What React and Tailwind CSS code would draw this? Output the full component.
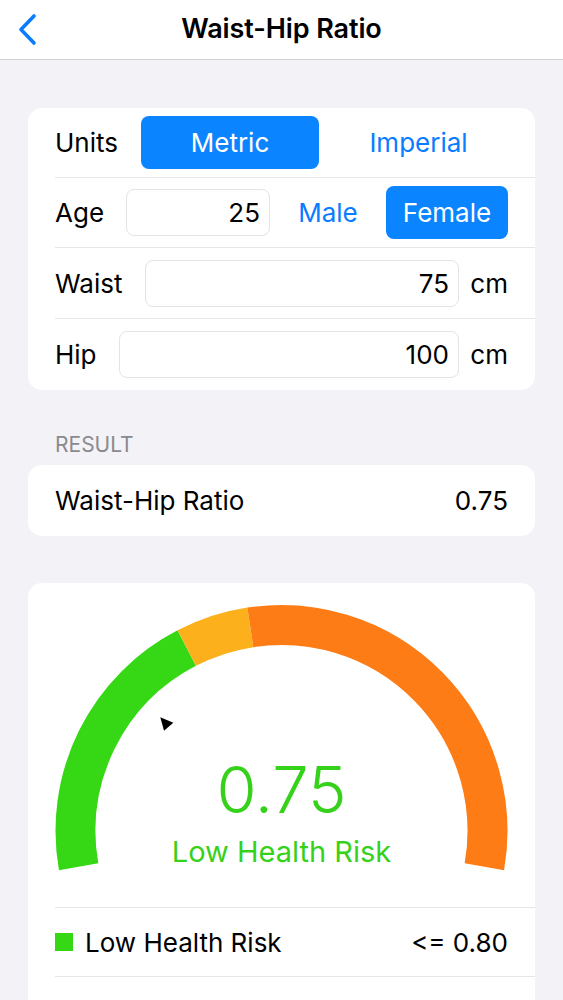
import { useState } from 'react';

function Header() {
  return (
    <div className="grid h-[60px] grid-cols-[1fr_auto_1fr] items-center border-b border-[#d1d1d6] bg-white">
      <button className="flex h-full items-center pl-[17px] text-[#0a7cff]" title="Back">
        <svg width="20" height="33" viewBox="0 0 20 33" fill="none">
          <path d="M17 3 L4 16.5 L17 30" stroke="currentColor" strokeWidth="3.6" strokeLinecap="round" strokeLinejoin="round" />
        </svg>
      </button>
      <h1 className="text-[27px] font-semibold tracking-[-0.1px] text-black">Waist-Hip Ratio</h1>
      <div />
    </div>
  );
}

function Row({ children, last, h = 'h-[70px]' }) {
  return (
    <div className={`ml-[27px] flex items-center pr-[27px] ${h} ${last ? '' : 'border-b border-[#e5e5ea]'}`}>
      {children}
    </div>
  );
}

function NumberBox({ value, className }) {
  return (
    <div className={`flex h-[47px] items-center justify-end rounded-[8px] border border-[#e3e3e8] bg-white pr-[9px] text-[26px] text-black ${className}`}>
      {value}
    </div>
  );
}

function Gauge() {
  // arc centre and radius in card coordinates
  const cx = 253.5;
  const cy = 248;
  const r = 206;
  const pt = (deg) => {
    const a = (deg * Math.PI) / 180;
    return [cx + r * Math.cos(a), cy - r * Math.sin(a)];
  };
  const arc = (from, to) => {
    const [x1, y1] = pt(from);
    const [x2, y2] = pt(to);
    const large = from - to > 180 ? 1 : 0;
    return `M ${x1} ${y1} A ${r} ${r} 0 ${large} 1 ${x2} ${y2}`;
  };

  return (
    <svg width="507" height="324" viewBox="0 0 507 324" className="block">
      <path d={arc(190, 117.4)} stroke="#36d816" strokeWidth="40" fill="none" />
      <path d={arc(117.4, 98.7)} stroke="#fcb11c" strokeWidth="40" fill="none" />
      <path d={arc(98.7, -10)} stroke="#fd7c15" strokeWidth="40" fill="none" />
      <polygon points="132.3,134.3 145.3,139.7 136,147.7" fill="#000" />
      <text x={cx} y="230" textAnchor="middle" fontSize="65" fontWeight="300" fill="#36d11a" fontFamily="Inter, sans-serif">
        0.75
      </text>
      <text x={cx} y="279" textAnchor="middle" fontSize="29" fontWeight="400" fill="#36d11a" fontFamily="Inter, sans-serif">
        Low Health Risk
      </text>
    </svg>
  );
}

export default function App() {
  const [units, setUnits] = useState('metric');
  const [sex, setSex] = useState('female');

  return (
    <div className="min-h-[1000px] w-full bg-[#f2f2f7] font-['Inter',sans-serif] text-black">
      <Header />

      <div className="px-[28px] pt-[48px]">
        <div className="rounded-[14px] bg-white">
          <Row>
            <span className="w-[86px] text-[26px]">Units</span>
            <button
              onClick={() => setUnits('metric')}
              className={`h-[53px] w-[178px] rounded-[8px] text-[26px] ${units === 'metric' ? 'bg-[#0a84ff] text-white' : 'text-[#0a7cff]'}`}
            >
              Metric
            </button>
            <button
              onClick={() => setUnits('imperial')}
              className={`h-[53px] flex-1 rounded-[8px] pl-[10px] text-[26px] ${units === 'imperial' ? 'bg-[#0a84ff] text-white' : 'text-[#0a7cff]'}`}
            >
              Imperial
            </button>
          </Row>
          <Row>
            <span className="w-[71px] text-[26px]">Age</span>
            <NumberBox value="25" className="w-[144px]" />
            <button
              onClick={() => setSex('male')}
              className={`h-[53px] flex-1 rounded-[8px] text-[26px] ${sex === 'male' ? 'bg-[#0a84ff] text-white' : 'text-[#0a7cff]'}`}
            >
              Male
            </button>
            <button
              onClick={() => setSex('female')}
              className={`h-[53px] w-[122px] rounded-[8px] text-[26px] ${sex === 'female' ? 'bg-[#0a84ff] text-white' : 'text-[#0a7cff]'}`}
            >
              Female
            </button>
          </Row>
          <Row h="h-[71px]">
            <span className="w-[90px] text-[26px]">Waist</span>
            <NumberBox value="75" className="flex-1" />
            <span className="w-[49px] text-right text-[26px]">cm</span>
          </Row>
          <Row last h="h-[71px]">
            <span className="w-[64px] text-[26px]">Hip</span>
            <NumberBox value="100" className="flex-1" />
            <span className="w-[49px] text-right text-[26px]">cm</span>
          </Row>
        </div>

        <div className="mt-[42px] pl-[27px] text-[21px] leading-[26px] text-[#8a8a8e]">RESULT</div>
        <div className="mt-[7px] flex h-[71px] items-center justify-between rounded-[14px] bg-white px-[27px] text-[26px]">
          <span>Waist-Hip Ratio</span>
          <span>0.75</span>
        </div>

        <div className="mt-[47px] overflow-hidden rounded-[14px] bg-white">
          <Gauge />
          <div className="ml-[27px] border-t border-[#e5e5ea]">
            <div className="flex h-[69px] items-center justify-between border-b border-[#e5e5ea] pr-[27px] text-[26px]">
              <div className="flex items-center gap-[12px]">
                <span className="h-[18px] w-[18px] bg-[#36d816]" />
                <span>Low Health Risk</span>
              </div>
              <span>&lt;= 0.80</span>
            </div>
            <div className="h-[40px]" />
          </div>
        </div>
      </div>
    </div>
  );
}
